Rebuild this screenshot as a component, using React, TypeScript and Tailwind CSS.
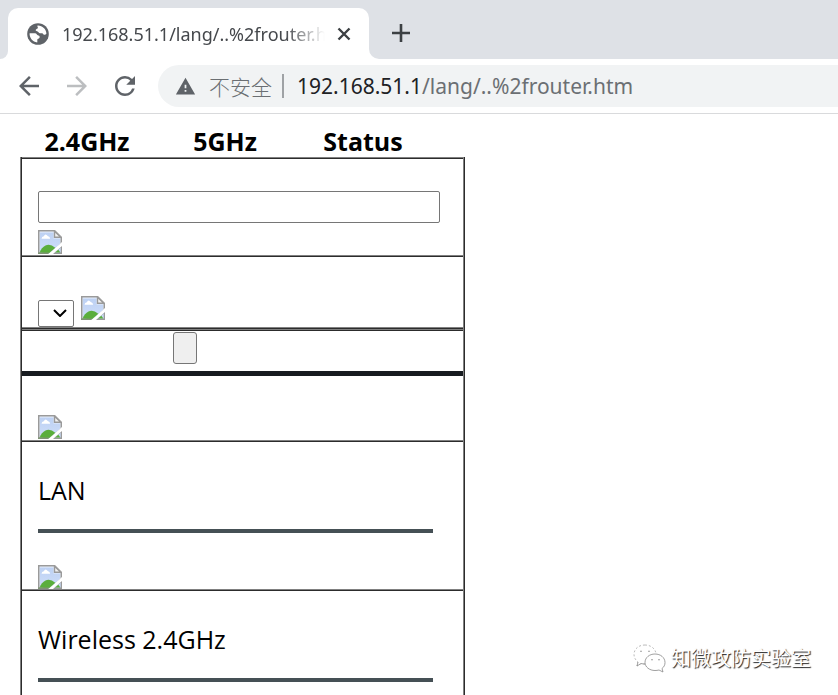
import { MdArrowBack, MdArrowForward, MdRefresh, MdWarning } from "react-icons/md";
import type { ReactNode } from "react";

const latin = "font-['Open_Sans','Noto_Sans',sans-serif]";

function BrokenImage() {
  return (
    <svg viewBox="0 0 24 24" className="size-6 shrink-0" role="img" aria-label="Broken image">
      <defs>
        <linearGradient id="sky" x1="0" y1="0" x2="0" y2="1">
          <stop offset="0" stopColor="#bdd1f3" />
          <stop offset="1" stopColor="#d0dffa" />
        </linearGradient>
      </defs>
      <path d="M0 0H17L24 7V12L10 24H0Z" fill="#9a9a9a" />
      <path d="M1.5 1.5H16V8H22.5V13.3L10 24L1.500 22.500Z" fill="#e8effc" />
      <path d="M2 2.5H15.500V8.5H22V13.7L10 24L2 22.500Z" fill="url(#sky)" />
      <path d="M16.500 1.2V7.200H22.800Z" fill="#f2f2f2" stroke="#9a9a9a" strokeWidth="1.400" />
      <path d="M3.5 8.8Q3.800 6.700 5.800 6.300Q7.500 2.800 9.700 6Q12 6.500 12.200 8.800Z" fill="#fff" />
      <path d="M1.500 22.700Q3.500 17.500 7.500 15.500Q12 13.300 17.300 17.700L11 23.200Z" fill="#5aae3c" />
      <path d="M24 16V24H15Z" fill="#9a9a9a" />
      <path d="M22.700 17.500V22.500H17Z" fill="#c9dbf8" />
      <path d="M17 22.600L20.300 19.700Q21.700 21 22.300 22.600Z" fill="#5aae3c" />
      <path d="M0 22.600H11.500L10 24H0Z" fill="#7f9474" />
    </svg>
  );
}

function Globe() {
  return (
    <svg viewBox="0 0 22 22" className="size-[22px] shrink-0" aria-hidden="true">
      <circle cx="11" cy="11" r="10.800" fill="#5f6368" />
      <path d="M10.500 2.600C15 2.300 19.300 6 19.400 10.800C18.500 12.200 17 12 16.300 11.200C15.800 10 14.500 10.300 13 10.200C11.600 10 11.800 8.700 10.600 8.400C9 8.300 8.300 7.500 8.900 6.600C9.300 5.800 10.600 6 10.900 5C11 4.200 10 3.600 10.500 2.600Z" fill="#fff" />
      <path d="M2.600 10.300H8C9.800 10.300 9.700 12.200 11.300 12.500C12.800 12.600 13 14 12.400 15C11.800 15.800 10.500 15.500 10.300 16.700C10.200 17.600 10.600 18.300 10.200 19.400C5.800 19 2.300 15 2.600 10.300Z" fill="#fff" />
    </svg>
  );
}

function Cell({ children, className = "" }: { children: ReactNode; className?: string }) {
  return (
    <div className={`border-t-2 border-[#808080] [border-top-style:ridge] px-4 ${className}`}>
      {children}
    </div>
  );
}

function Section({ title }: { title: string }) {
  return (
    <Cell className="pt-8">
      <h2 className="text-[25px] leading-8">{title}</h2>
      <hr className="mt-[23px] mr-[14px] h-1 border-0 bg-[#455055]" />
      <div className="mt-8">
        <BrokenImage />
      </div>
    </Cell>
  );
}

function TabStrip() {
  return (
    <div className="flex h-[59px] items-end bg-[#dee1e6]">
      <div className="h-[10px] w-2 bg-white">
        <div className="size-full rounded-br-lg bg-[#dee1e6]" />
      </div>
      <div className="flex h-[51px] w-[361px] items-center rounded-t-[10px] bg-white pr-[18px] pl-[19px]">
        <Globe />
        <span className="mr-3 ml-[13px] flex-1 overflow-hidden whitespace-nowrap font-['Noto_Sans','Open_Sans',sans-serif] text-[18px] leading-7 text-[#45484c] [mask-image:linear-gradient(to_right,black_85%,transparent)]">
          192.168.51.1/lang/..%2frouter.htm
        </span>
        <button aria-label="Close tab">
          <svg viewBox="0 0 14 14" className="size-[14px]" fill="none" stroke="#3c4043" strokeWidth="2.4">
            <path d="M1.500 1.500L12.500 12.500M12.500 1.500L1.500 12.500" />
          </svg>
        </button>
      </div>
      <div className="h-[10px] w-[10px] bg-white">
        <div className="size-full rounded-bl-[10px] bg-[#dee1e6]" />
      </div>
      <button aria-label="New tab" className="mb-[17px] ml-[13px]">
        <svg viewBox="0 0 18 18" className="size-[18px]" fill="none" stroke="#3c4043" strokeWidth="2.6">
          <path d="M9 0V18M0 9H18" />
        </svg>
      </button>
    </div>
  );
}

function Toolbar() {
  return (
    <div className="flex h-[55px] items-center gap-[18px] border-b border-[#d9dadc] pl-[14px]">
      <button aria-label="Back" className="text-[#5f6368]">
        <MdArrowBack className="size-[30px]" />
      </button>
      <button aria-label="Forward" className="text-[#bcbec0]">
        <MdArrowForward className="size-[30px]" />
      </button>
      <button aria-label="Reload" className="text-[#5f6368]">
        <MdRefresh className="size-[30px]" />
      </button>
      <div className="flex h-[42px] flex-1 items-center rounded-l-full bg-[#f1f3f4] pl-[17px] whitespace-nowrap">
        <MdWarning className="size-[21px] text-[#5f6368]" />
        <span className="ml-[13px] font-['Noto_Sans_CJK_SC',sans-serif] text-[21px] leading-8 font-light text-[#6b6f73]">
          不安全
        </span>
        <span className="ml-[10px] h-6 w-[2px] bg-[#9fa2a5]" />
        <span className="ml-[13px] font-['Noto_Sans','Open_Sans',sans-serif] text-[21px] leading-8 text-[#6b6f73]">
          <span className="text-[#202124]">192.168.51.1</span>/lang/..%2frouter.htm
        </span>
      </div>
    </div>
  );
}

function Watermark() {
  return (
    <div className="absolute right-[27px] bottom-[21px] flex items-center gap-1">
      <svg viewBox="0 0 34 30" className="h-[30px] w-[34px]" fill="#fff" stroke="#888" strokeWidth="0.8">
        <path d="M12 2C5.500 2 1 6 1 11.500C1 14.500 2.500 17 5 19L4 23L8 20.500Q10 21 12 21C18 21 23 17 23 11.500C23 6 18 2 12 2Z" stroke="#aaa" strokeDasharray="2 2" />
        <path d="M5 19L4 23L8 20.500Q10 21 12 21" />
        <path d="M22 11C16.500 11 12 14.500 12 19.500C12 24 16.500 27.500 22 27.500Q24 27.500 26 27L30 29L29 25.500C31 24 32 22 32 19.500C32 14.500 27.500 11 22 11Z" />
        <path d="M7 8.500Q8 7.500 9 8.500M15 8.500Q16 7.500 17 8.500M18 17Q19 16 20 17M25 17Q26 16 27 17" fill="none" />
      </svg>
      <span className="font-['Noto_Sans_CJK_SC',sans-serif] text-[20px] leading-8 text-white [text-shadow:1px_1px_1px_#222]">
        知微攻防实验室
      </span>
    </div>
  );
}

export default function App() {
  return (
    <div className={`relative flex h-screen flex-col overflow-hidden bg-white text-black ${latin}`}>
      <TabStrip />
      <Toolbar />
      <main className="min-h-0 flex-1 overflow-hidden">
        <table className="mt-3 ml-[18px] w-[414px] table-fixed">
          <thead>
            <tr className="text-[25px] leading-[31px] font-bold">
              <th scope="col">2.4GHz</th>
              <th scope="col">5GHz</th>
              <th scope="col">Status</th>
            </tr>
          </thead>
        </table>
        <form className="ml-5 w-[445px] border-x-2 border-[#808080] [border-style:ridge]">
          <Cell className="pt-8">
            <input aria-label="Value" className="block h-8 w-[402px] rounded-xs border border-[#767676] px-1" />
            <div className="mt-[7px] pb-px">
              <BrokenImage />
            </div>
          </Cell>
          <Cell className="flex items-start gap-[7px] pt-[39px]">
            <div className="relative mt-1 h-[27px] w-9">
              <select aria-label="Option" className="size-full appearance-none rounded-xs border border-[#767676] bg-white" />
              <svg viewBox="0 0 14 8" className="pointer-events-none absolute top-[9px] right-[7px] h-2 w-[14px]" fill="none" stroke="#000" strokeWidth="2">
                <path d="M1 1L7 7L13 1" />
              </svg>
            </div>
            <BrokenImage />
          </Cell>
          <div className="border-t-2 border-[#808080] [border-top-style:ridge]" />
          <Cell className="h-[42px] pt-px">
            <button type="button" aria-label="Apply" className="ml-[135px] block h-8 w-6 rounded-[3px] border border-[#767676] bg-[#efefef]" />
          </Cell>
          <div className="border-t-[5px] border-[#171b20] px-4 pt-[39px] pb-px">
            <BrokenImage />
          </div>
          <Section title="LAN" />
          <Section title="Wireless 2.4GHz" />
        </form>
      </main>
      <Watermark />
    </div>
  );
}
